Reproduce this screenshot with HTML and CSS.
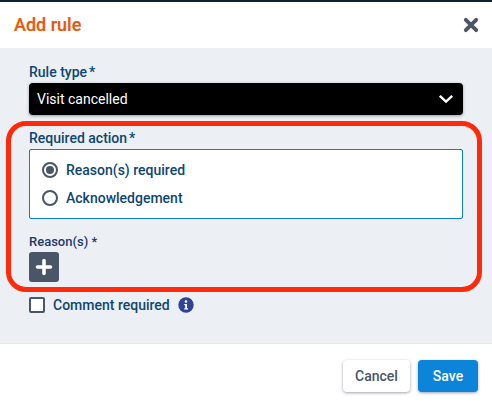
FILE: index.html
```html
<!DOCTYPE html>
<html lang="en">
<head>
<meta charset="utf-8">
<title>Add rule</title>
<link rel="stylesheet" href="styles.css">
</head>
<body>
<div class="topline"></div>
<div class="dialog">
  <header class="head">
    <h1 class="title">Add rule</h1>
    <svg class="close" width="16" height="16" viewBox="0 0 16 16"><path d="M2.8 2.8 13.2 13.2M13.2 2.8 2.8 13.2" stroke="#4a5568" stroke-width="3.8" stroke-linecap="round" fill="none"/></svg>
  </header>
  <main class="body">
    <label class="label">Rule type<span class="star">*</span></label>
    <div class="select">
      <span>Visit cancelled</span>
      <svg width="16" height="10" viewBox="0 0 16 10"><path d="M1.8 1.8 8 7.6 14.2 1.8" stroke="#fff" stroke-width="2.4" fill="none"/></svg>
    </div>
    <label class="label label-action">Required action<span class="star">*</span></label>
    <div class="radios">
      <div class="radio-row"><span class="radio radio-on"></span><span>Reason(s) required</span></div>
      <div class="radio-row"><span class="radio"></span><span>Acknowledgement</span></div>
    </div>
    <label class="label label-reasons">Reason(s) *</label>
    <div class="add">
      <svg width="18" height="18" viewBox="0 0 18 18"><path d="M9 2.5V15.5M2.500 9H15.500" stroke="#fff" stroke-width="3.600" stroke-linecap="round" fill="none"/></svg>
    </div>
    <div class="comment">
      <span class="check"></span>
      <span>Comment required</span>
      <svg class="info" width="16" height="16" viewBox="0 0 16 16"><circle cx="8" cy="8" r="7.700" fill="#2f4494"/><circle cx="8" cy="4.500" r="1.300" fill="#fff"/><path d="M6.300 7H9V11.200H10V12.400H6.200V11.200H7.200V8.200H6.300Z" fill="#fff"/></svg>
    </div>
    <div class="highlight"></div>
  </main>
  <footer class="foot">
    <button class="btn btn-cancel">Cancel</button>
    <button class="btn btn-save">Save</button>
  </footer>
</div>
</body>
</html>
```
FILE: styles.css
```css
* { box-sizing: border-box; }
html, body { margin: 0; padding: 0; }
body {
  width: 492px;
  height: 407px;
  overflow: hidden;
  background: #fff;
  font-family: Roboto, "Liberation Sans", sans-serif;
}
.topline { height: 2px; background: #0d2238; }
.dialog { display: flex; flex-direction: column; height: 405px; }
.head {
  height: 46px;
  display: flex;
  align-items: center;
  justify-content: space-between;
  padding: 0 13px 0 14px;
  background: #fff;
  box-shadow: 0 1px 2px rgba(0,0,0,.08);
  position: relative;
}
.title { margin: 0 0 2px; font-size: 18px; font-weight: 500; color: #e8590c; -webkit-text-stroke: .2px #e8590c; }
.body {
  position: relative;
  height: 295px;
  background: #eceff4;
  padding: 16px 29px 0;
  display: flex;
  flex-direction: column;
}
.label { font-size: 14px; line-height: 17px; font-weight: 500; color: #0f4670; }
.star { margin-left: 2px; }
.select {
  margin-top: 2px;
  height: 32px;
  background: #000;
  border-radius: 4px;
  color: #fff;
  font-size: 14px;
  display: flex;
  align-items: center;
  justify-content: space-between;
  padding: 0 9px 0 8px;
  box-shadow: 0 1px 3px rgba(60,70,90,.5);
}
.label-action { margin-top: 15px; }
.radios {
  margin-top: 2px;
  height: 70px;
  background: #fff;
  border: 1px solid #0b7fd0;
  border-radius: 2px;
  padding: 9px 12px;
  display: flex;
  flex-direction: column;
  gap: 6px;
  font-size: 14px;
  font-weight: 500;
  color: #0f4670;
}
.radio-row { display: flex; align-items: center; gap: 8px; height: 22px; }
.radio {
  width: 16px; height: 16px;
  border: 2px solid #4a5568;
  border-radius: 50%;
  background: #fff;
  display: flex;
  align-items: center;
  justify-content: center;
}
.radio-on::after { content: ""; width: 8px; height: 8px; border-radius: 50%; background: #4a5568; }
.label-reasons { margin-top: 14px; color: #1e3a68; font-weight: 500; font-size: 13px; }
.add {
  margin-top: 2px;
  width: 30px; height: 30px;
  background: #4a5568;
  border-radius: 3px;
  display: flex;
  align-items: center;
  justify-content: center;
}
.comment {
  margin-top: 15px;
  display: flex;
  align-items: center;
  font-size: 14px;
  font-weight: 500;
  color: #0f4670;
}
.check {
  width: 16px; height: 16px;
  border: 2px solid #4a5568;
  border-radius: 2px;
  background: #fff;
  margin-right: 8px;
}
.info { margin-left: 8px; }
.highlight {
  position: absolute;
  left: 6px;
  top: 73px;
  width: 476px;
  height: 171px;
  border: 5px solid #ff2a0a;
  border-radius: 20px;
  pointer-events: none;
}
.foot {
  flex: 1;
  background: #fff;
  border-top: 1px solid #e2e5ea;
  display: flex;
  justify-content: flex-end;
  align-items: flex-start;
  gap: 8px;
  padding: 16px 14px 0 0;
}
.btn {
  height: 32px;
  border: 0;
  border-radius: 4px;
  font-family: inherit;
  font-size: 14px;
  font-weight: 500;
  padding: 0;
}
.btn-cancel { width: 67px; background: #fff; color: #4a5568; box-shadow: 0 1px 3px rgba(60,70,90,.5); }
.btn-save { width: 60px; background: #0b84d9; color: #fff; box-shadow: 0 1px 3px rgba(60,70,90,.5); }
```
